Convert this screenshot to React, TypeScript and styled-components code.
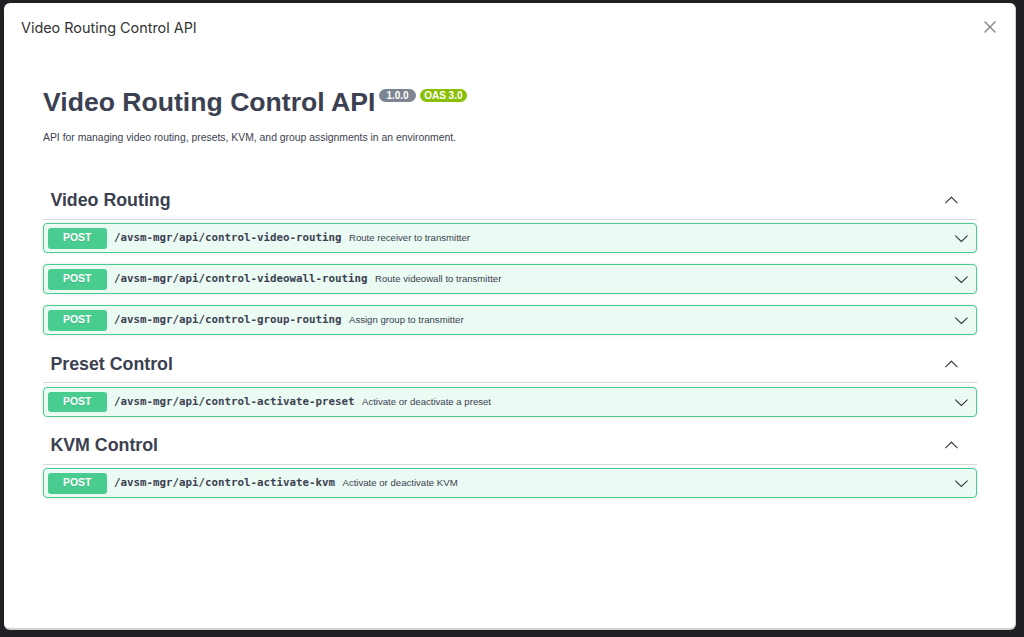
import React from "react";
import styled, { createGlobalStyle } from "styled-components";

interface Operation {
  method: string;
  path: string;
  summary: string;
}

interface Tag {
  name: string;
  operations: Operation[];
}

const tags: Tag[] = [
  {
    name: "Video Routing",
    operations: [
      { method: "POST", path: "/avsm-mgr/api/control-video-routing", summary: "Route receiver to transmitter" },
      { method: "POST", path: "/avsm-mgr/api/control-videowall-routing", summary: "Route videowall to transmitter" },
      { method: "POST", path: "/avsm-mgr/api/control-group-routing", summary: "Assign group to transmitter" },
    ],
  },
  {
    name: "Preset Control",
    operations: [
      { method: "POST", path: "/avsm-mgr/api/control-activate-preset", summary: "Activate or deactivate a preset" },
    ],
  },
  {
    name: "KVM Control",
    operations: [
      { method: "POST", path: "/avsm-mgr/api/control-activate-kvm", summary: "Activate or deactivate KVM" },
    ],
  },
];

const GlobalStyle = createGlobalStyle`
  html, body {
    margin: 0;
    padding: 0;
    background: #1f2024;
  }
  * {
    box-sizing: border-box;
  }
`;

const Backdrop = styled.div`
  height: 637px;
  padding: 3px 8px 7px 4px;
`;

const Modal = styled.div`
  height: 100%;
  background: #fff;
  border-radius: 6px;
  border-right: 1px solid #cfd0d2;
  border-bottom: 2px solid #cfd0d2;
  display: flex;
  flex-direction: column;
  overflow: hidden;
`;

const ModalHeader = styled.div`
  height: 48px;
  display: flex;
  align-items: center;
  justify-content: space-between;
  padding: 0 18px 0 17px;
`;

const ModalTitle = styled.div`
  font-family: Inter, "Noto Sans", sans-serif;
  font-size: 14.4px;
  color: #333;
`;

const CloseButton = styled.button`
  border: none;
  background: none;
  padding: 0;
  width: 14px;
  height: 14px;
  display: flex;
  cursor: pointer;
`;

const Content = styled.div`
  padding: 36px 38px 0 39px;
  font-family: "Liberation Sans", Arial, sans-serif;
  color: #3b4151;
`;

const Title = styled.h2`
  margin: 0;
  display: flex;
  align-items: flex-start;
  font-size: 26.6px;
  line-height: 30.6px;
  font-weight: 700;
  color: #3b4151;
`;

const Badges = styled.div`
  display: flex;
  gap: 4px;
  margin: 2px 0 0 4px;
`;

const Badge = styled.span<{ $color: string; $pad: number }>`
  background: ${(p) => p.$color};
  color: #fff;
  font-size: 10px;
  line-height: 13px;
  font-weight: 700;
  padding: 0 ${(p) => p.$pad}px;
  border-radius: 40px;
`;

const Description = styled.p`
  margin: 14.8px 0 38.6px;
  font-size: 10.4px;
  line-height: 12px;
`;

const TagSection = styled.section``;

const TagHeader = styled.div`
  display: flex;
  align-items: center;
  justify-content: space-between;
  padding: 7.4px 18px 7.4px 7.4px;
  border-bottom: 1px solid #d6d7da;
  margin-bottom: 3.7px;
`;

const TagName = styled.h3`
  margin: 0;
  font-size: 17.8px;
  line-height: 21px;
  font-weight: 700;
  color: #3b4151;
`;

const OpBlock = styled.div`
  border: 1px solid #49cc90;
  background: rgba(73, 204, 144, 0.1);
  border-radius: 4px;
  margin-bottom: 11px;
  box-shadow: 0 0 3px rgba(0, 0, 0, 0.12);
`;

const Summary = styled.div`
  display: flex;
  align-items: center;
  height: 28px;
  padding: 0 3.7px;
  line-height: 12px;
`;

const Method = styled.span`
  min-width: 59px;
  padding: 4.2px 0;
  font-size: 10.4px;
  line-height: 12px;
  font-weight: 700;
  text-align: center;
  color: #fff;
  background: #49cc90;
  border-radius: 3px;
  text-shadow: 0 1px 0 rgba(0, 0, 0, 0.1);
`;

const Path = styled.span`
  padding: 0 7.4px;
  font-family: "DejaVu Sans Mono", monospace;
  font-weight: 700;
  font-size: 10.8px;
  color: #3b4151;
`;

const OpSummary = styled.span`
  flex: 1;
  font-size: 9.6px;
  color: #3b4151;
`;

const ArrowBox = styled.span`
  display: flex;
  margin-right: 4px;
`;

const Arrow = ({ up }: { up?: boolean }) => (
  <svg
    width="14.8"
    height="14.8"
    viewBox="0 0 20 20"
    style={up ? { transform: "rotate(180deg)" } : undefined}
  >
    <path
      fill="#333"
      d="M17.418 6.109c.272-.268.709-.268.979 0s.271.701 0 .969l-7.908 7.83c-.27.268-.707.268-.979 0l-7.908-7.83c-.27-.268-.27-.701 0-.969.271-.268.709-.268.979 0L10 13.25l7.418-7.141z"
    />
  </svg>
);

export default function App() {
  return (
    <>
      <GlobalStyle />
      <Backdrop>
        <Modal>
          <ModalHeader>
            <ModalTitle>Video Routing Control API</ModalTitle>
            <CloseButton aria-label="Close">
              <svg width="14" height="14" viewBox="0 0 14 14">
                <path d="M2 2L12 12M12 2L2 12" stroke="#8a8c90" strokeWidth="1.5" strokeLinecap="round" />
              </svg>
            </CloseButton>
          </ModalHeader>
          <Content>
            <Title>
              Video Routing Control API
              <Badges>
                <Badge $color="#7d8492" $pad={7}>1.0.0</Badge>
                <Badge $color="#89bf04" $pad={4.5}>OAS 3.0</Badge>
              </Badges>
            </Title>
            <Description>
              API for managing video routing, presets, KVM, and group assignments in an environment.
            </Description>
            {tags.map((tag) => (
              <TagSection key={tag.name}>
                <TagHeader>
                  <TagName>{tag.name}</TagName>
                  <Arrow up />
                </TagHeader>
                {tag.operations.map((op) => (
                  <OpBlock key={op.path}>
                    <Summary>
                      <Method>{op.method}</Method>
                      <Path>{op.path}</Path>
                      <OpSummary>{op.summary}</OpSummary>
                      <ArrowBox>
                        <Arrow />
                      </ArrowBox>
                    </Summary>
                  </OpBlock>
                ))}
              </TagSection>
            ))}
          </Content>
        </Modal>
      </Backdrop>
    </>
  );
}
